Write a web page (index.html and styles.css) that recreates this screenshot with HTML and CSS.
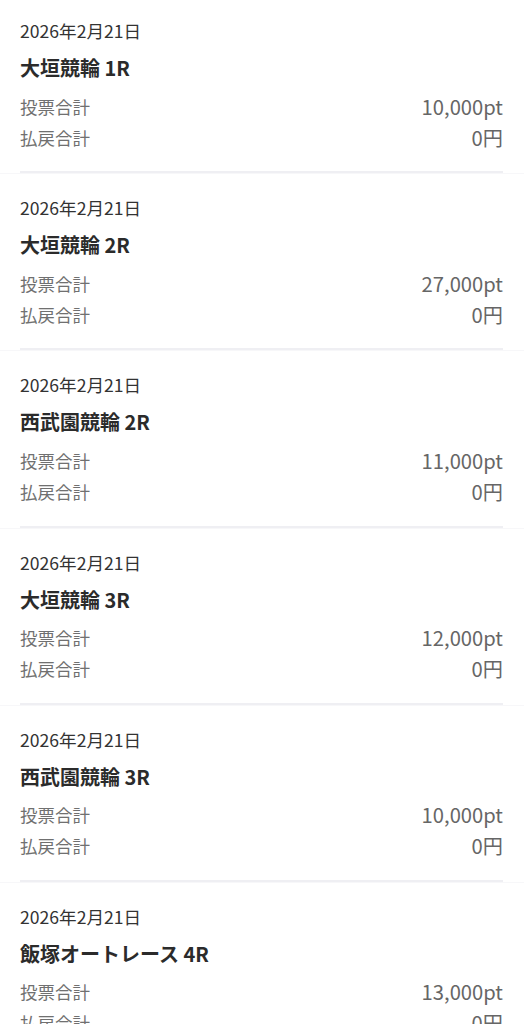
FILE: index.html
```html
<!DOCTYPE html>
<html lang="ja">
<head>
    <meta charset="UTF-8">
    <meta name="viewport" content="width=device-width, initial-scale=1.0">
    <title>投票履歴</title>
    <link rel="stylesheet" href="styles.css">
</head>
<body>

<div class="history-list">
    <div class="history-item">
        <div class="race-date">2026年2月21日</div>
        <div class="race-name">大垣競輪 1R</div>
        <div class="total-row"><span class="total-label">投票合計</span><span class="total-value">10,000pt</span></div>
        <div class="total-row"><span class="total-label">払戻合計</span><span class="total-value">0円</span></div>
        <div class="divider"></div>
    </div>
    <div class="history-item">
        <div class="race-date">2026年2月21日</div>
        <div class="race-name">大垣競輪 2R</div>
        <div class="total-row"><span class="total-label">投票合計</span><span class="total-value">27,000pt</span></div>
        <div class="total-row"><span class="total-label">払戻合計</span><span class="total-value">0円</span></div>
        <div class="divider"></div>
    </div>
    <div class="history-item">
        <div class="race-date">2026年2月21日</div>
        <div class="race-name">西武園競輪 2R</div>
        <div class="total-row"><span class="total-label">投票合計</span><span class="total-value">11,000pt</span></div>
        <div class="total-row"><span class="total-label">払戻合計</span><span class="total-value">0円</span></div>
        <div class="divider"></div>
    </div>
    <div class="history-item">
        <div class="race-date">2026年2月21日</div>
        <div class="race-name">大垣競輪 3R</div>
        <div class="total-row"><span class="total-label">投票合計</span><span class="total-value">12,000pt</span></div>
        <div class="total-row"><span class="total-label">払戻合計</span><span class="total-value">0円</span></div>
        <div class="divider"></div>
    </div>
    <div class="history-item">
        <div class="race-date">2026年2月21日</div>
        <div class="race-name">西武園競輪 3R</div>
        <div class="total-row"><span class="total-label">投票合計</span><span class="total-value">10,000pt</span></div>
        <div class="total-row"><span class="total-label">払戻合計</span><span class="total-value">0円</span></div>
        <div class="divider"></div>
    </div>
    <div class="history-item">
        <div class="race-date">2026年2月21日</div>
        <div class="race-name">飯塚オートレース 4R</div>
        <div class="total-row"><span class="total-label">投票合計</span><span class="total-value">13,000pt</span></div>
        <div class="total-row"><span class="total-label">払戻合計</span><span class="total-value">0円</span></div>
        <div class="divider"></div>
    </div>
</div>

</body>
</html>
```

FILE: styles.css
```css
body {
    margin: 0;
    background-color: #fff;
    font-family: "Noto Sans CJK JP", "Noto Sans", sans-serif;
    color: #333;
}
.history-list {
    margin-top: -3px;
}
.history-item {
    padding: 22px 21px 0 20px;
    border-bottom: 1px solid #f7f7f9;
}
.race-date {
    font-size: 17.6px;
    line-height: 24px;
    color: #333;
}
.race-name {
    margin-top: 11px;
    font-size: 20px;
    line-height: 28px;
    font-weight: 700;
    color: #2b2b2b;
}
.total-row {
    display: flex;
    justify-content: space-between;
    align-items: center;
    height: 31px;
}
.race-name + .total-row {
    margin-top: 8.5px;
}
.total-label {
    font-size: 17.5px;
    color: #707070;
}
.total-value {
    font-size: 20.2px;
    color: #666;
}
.divider {
    margin-top: 18.7px;
    height: 2px;
    background-color: #efeff3;
}
```
